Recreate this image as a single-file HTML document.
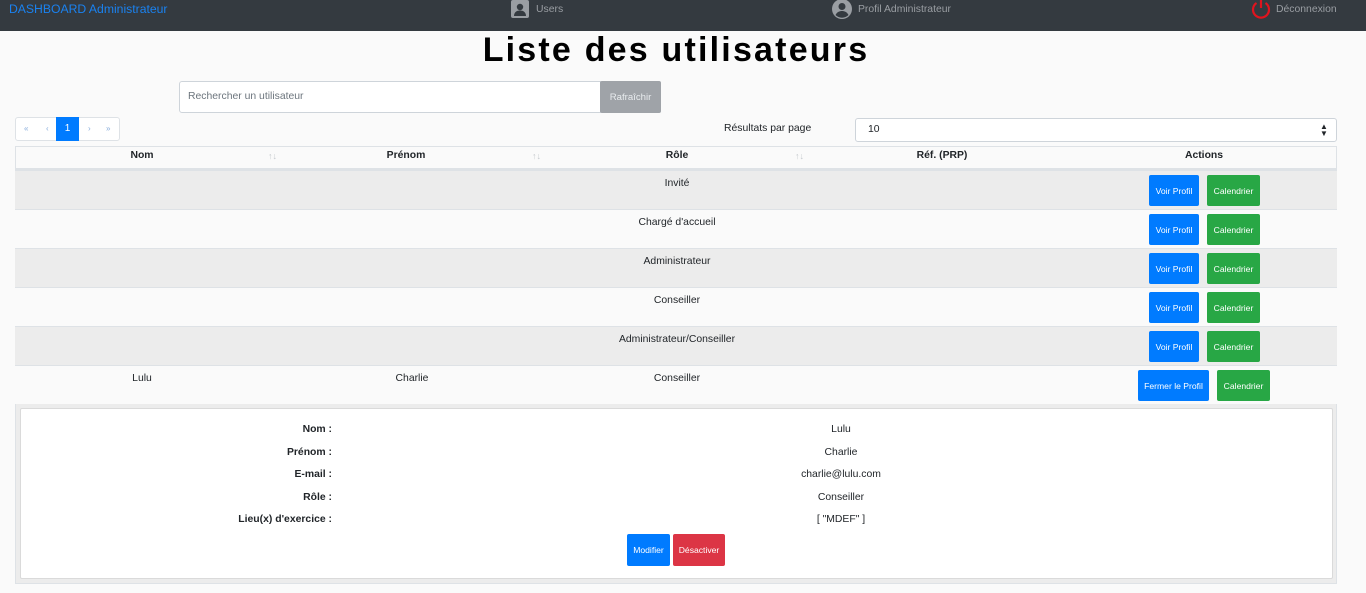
<!DOCTYPE html>
<html><head><meta charset="utf-8"><style>
*{box-sizing:border-box;margin:0;padding:0}
body{width:1366px;height:593px;overflow:hidden;background:#fafafa;font-family:"Liberation Sans",sans-serif;font-size:10.4px;color:#212529;position:relative}
.a{position:absolute}
.nav{left:0;top:0;width:1366px;height:31px;background:#343a40}
.nt{color:#9a9ea3;font-size:10.4px}
.btn{position:absolute;color:#fff;font-size:8.6px;border-radius:2px;display:flex;align-items:center;justify-content:center}
.b{background:#007bff}.g{background:#28a745}.r{background:#dc3545}
.row{position:absolute;left:15px;width:1322px;height:39px;border-top:1px solid #dee2e6}
.c{position:absolute;top:7px;text-align:center;width:264px}
.th{position:absolute;top:4px;font-weight:bold;text-align:center;width:264px}
.si{position:absolute;top:5px;color:#c5c9cd;font-size:9px}
.lab{position:absolute;right:1034px;font-weight:bold;text-align:right}
.val{position:absolute;left:741px;width:200px;text-align:center}
</style></head><body>
<div class="a nav"></div>
<div class="a" style="left:9px;top:2px;color:#1a82f0;font-size:12.2px">DASHBOARD Administrateur</div>
<svg class="a" style="left:511px;top:0" width="18" height="18" viewBox="0 0 18 18"><rect x="0" y="0" width="18" height="18" rx="2" fill="#9a9ea3"/><circle cx="9" cy="7" r="3.2" fill="#343a40"/><path d="M3 16c0-4 3-5.5 6-5.5s6 1.5 6 5.5z" fill="#343a40"/></svg>
<div class="a nt" style="left:536px;top:4px">Users</div>
<svg class="a" style="left:832px;top:-1px" width="20" height="20" viewBox="0 0 20 20"><circle cx="10" cy="10" r="10" fill="#9a9ea3"/><circle cx="10" cy="7.5" r="3.5" fill="#343a40"/><path d="M3.5 16c1.5-3 4-4 6.5-4s5 1 6.5 4a9 9 0 0 1-13 0z" fill="#343a40"/></svg>
<div class="a nt" style="left:858px;top:4px">Profil Administrateur</div>
<svg class="a" style="left:1250px;top:-2px" width="22" height="22" viewBox="0 0 22 22"><path d="M6.5 5a8 8 0 1 0 9 0" fill="none" stroke="#e0141e" stroke-width="2.2"/><line x1="11" y1="1" x2="11" y2="10" stroke="#e0141e" stroke-width="2.2"/></svg>
<div class="a nt" style="left:1276px;top:4px">Déconnexion</div>

<div class="a" style="left:0;top:31px;width:1352px;text-align:center;font-size:34px;font-weight:bold;letter-spacing:2.2px;color:#000">Liste des utilisateurs</div>

<div class="a" style="left:179px;top:81px;width:422px;height:32px;background:#fff;border:1px solid #ced4da;border-radius:3px 0 0 3px"></div>
<div class="a" style="left:188px;top:91px;color:#6c757d">Rechercher un utilisateur</div>
<div class="btn" style="left:600px;top:81px;width:61px;height:32px;background:#9fa3a8;font-size:9.6px;color:#e9ecef">Rafraîchir</div>

<div class="a" style="left:15px;top:117px;width:105px;height:24px;border:1px solid #dee2e6;border-radius:3px;background:#fff"></div>
<div class="a" style="left:56px;top:117px;width:23px;height:24px;background:#007bff;color:#fff;text-align:center;line-height:24px;font-size:10px">1</div>
<div class="a" style="left:24px;top:124px;color:#8aaedc;font-size:8px">«</div>
<div class="a" style="left:46px;top:124px;color:#8aaedc;font-size:8px">‹</div>
<div class="a" style="left:88px;top:124px;color:#8aaedc;font-size:8px">›</div>
<div class="a" style="left:106px;top:124px;color:#8aaedc;font-size:8px">»</div>
<div class="a" style="left:724px;top:123px">Résultats par page</div>
<div class="a" style="left:855px;top:118px;width:482px;height:24px;background:#fff;border:1px solid #ced4da;border-radius:3px"></div>
<div class="a" style="left:868px;top:124px">10</div>
<div class="a" style="left:1320px;top:123px;font-size:8px;line-height:7px">▲<br>▼</div>

<div class="a" style="left:15px;top:146px;width:1322px;height:438px;border:1px solid #dee2e6;background:#fafafa"></div>
<div class="row" style="top:146px;height:24px;border-top:none;border-bottom:2px solid #dee2e6">
<div class="th" style="left:-5px">Nom</div><div class="si" style="left:253px">↑↓</div>
<div class="th" style="left:259px">Prénom</div><div class="si" style="left:517px">↑↓</div>
<div class="th" style="left:530px">Rôle</div><div class="si" style="left:780px">↑↓</div>
<div class="th" style="left:795px">Réf. (PRP)</div>
<div class="th" style="left:1057px">Actions</div>
</div>

<div class="row" style="top:170px;background:#ececec"><div class="c" style="left:530px">Invité</div><div class="btn b" style="left:1134px;top:4px;width:50px;height:31px">Voir Profil</div><div class="btn g" style="left:1192px;top:4px;width:53px;height:31px">Calendrier</div></div>
<div class="row" style="top:209px;background:#fafafa"><div class="c" style="left:530px">Chargé d'accueil</div><div class="btn b" style="left:1134px;top:4px;width:50px;height:31px">Voir Profil</div><div class="btn g" style="left:1192px;top:4px;width:53px;height:31px">Calendrier</div></div>
<div class="row" style="top:248px;background:#ececec"><div class="c" style="left:530px">Administrateur</div><div class="btn b" style="left:1134px;top:4px;width:50px;height:31px">Voir Profil</div><div class="btn g" style="left:1192px;top:4px;width:53px;height:31px">Calendrier</div></div>
<div class="row" style="top:287px;background:#fafafa"><div class="c" style="left:530px">Conseiller</div><div class="btn b" style="left:1134px;top:4px;width:50px;height:31px">Voir Profil</div><div class="btn g" style="left:1192px;top:4px;width:53px;height:31px">Calendrier</div></div>
<div class="row" style="top:326px;background:#ececec"><div class="c" style="left:530px">Administrateur/Conseiller</div><div class="btn b" style="left:1134px;top:4px;width:50px;height:31px">Voir Profil</div><div class="btn g" style="left:1192px;top:4px;width:53px;height:31px">Calendrier</div></div>
<div class="row" style="top:365px;background:#fafafa"><div class="c" style="left:-5px">Lulu</div><div class="c" style="left:265px">Charlie</div><div class="c" style="left:530px">Conseiller</div><div class="btn b" style="left:1123px;top:4px;width:71px;height:31px">Fermer le Profil</div><div class="btn g" style="left:1202px;top:4px;width:53px;height:31px">Calendrier</div></div>

<div class="a" style="left:16px;top:404px;width:1320px;height:179px;background:#ececec"></div>
<div class="a" style="left:20px;top:408px;width:1313px;height:171px;background:#fff;border:1px solid #dadada;border-radius:2px"></div>
<div class="lab" style="top:424px">Nom :</div><div class="val" style="top:424px">Lulu</div>
<div class="lab" style="top:447px">Prénom :</div><div class="val" style="top:447px">Charlie</div>
<div class="lab" style="top:469px">E-mail :</div><div class="val" style="top:469px">charlie@lulu.com</div>
<div class="lab" style="top:492px">Rôle :</div><div class="val" style="top:492px">Conseiller</div>
<div class="lab" style="top:514px">Lieu(x) d'exercice :</div><div class="val" style="top:514px">[ "MDEF" ]</div>
<div class="btn b" style="left:627px;top:534px;width:43px;height:32px">Modifier</div>
<div class="btn r" style="left:673px;top:534px;width:52px;height:32px">Désactiver</div>
</body></html>
